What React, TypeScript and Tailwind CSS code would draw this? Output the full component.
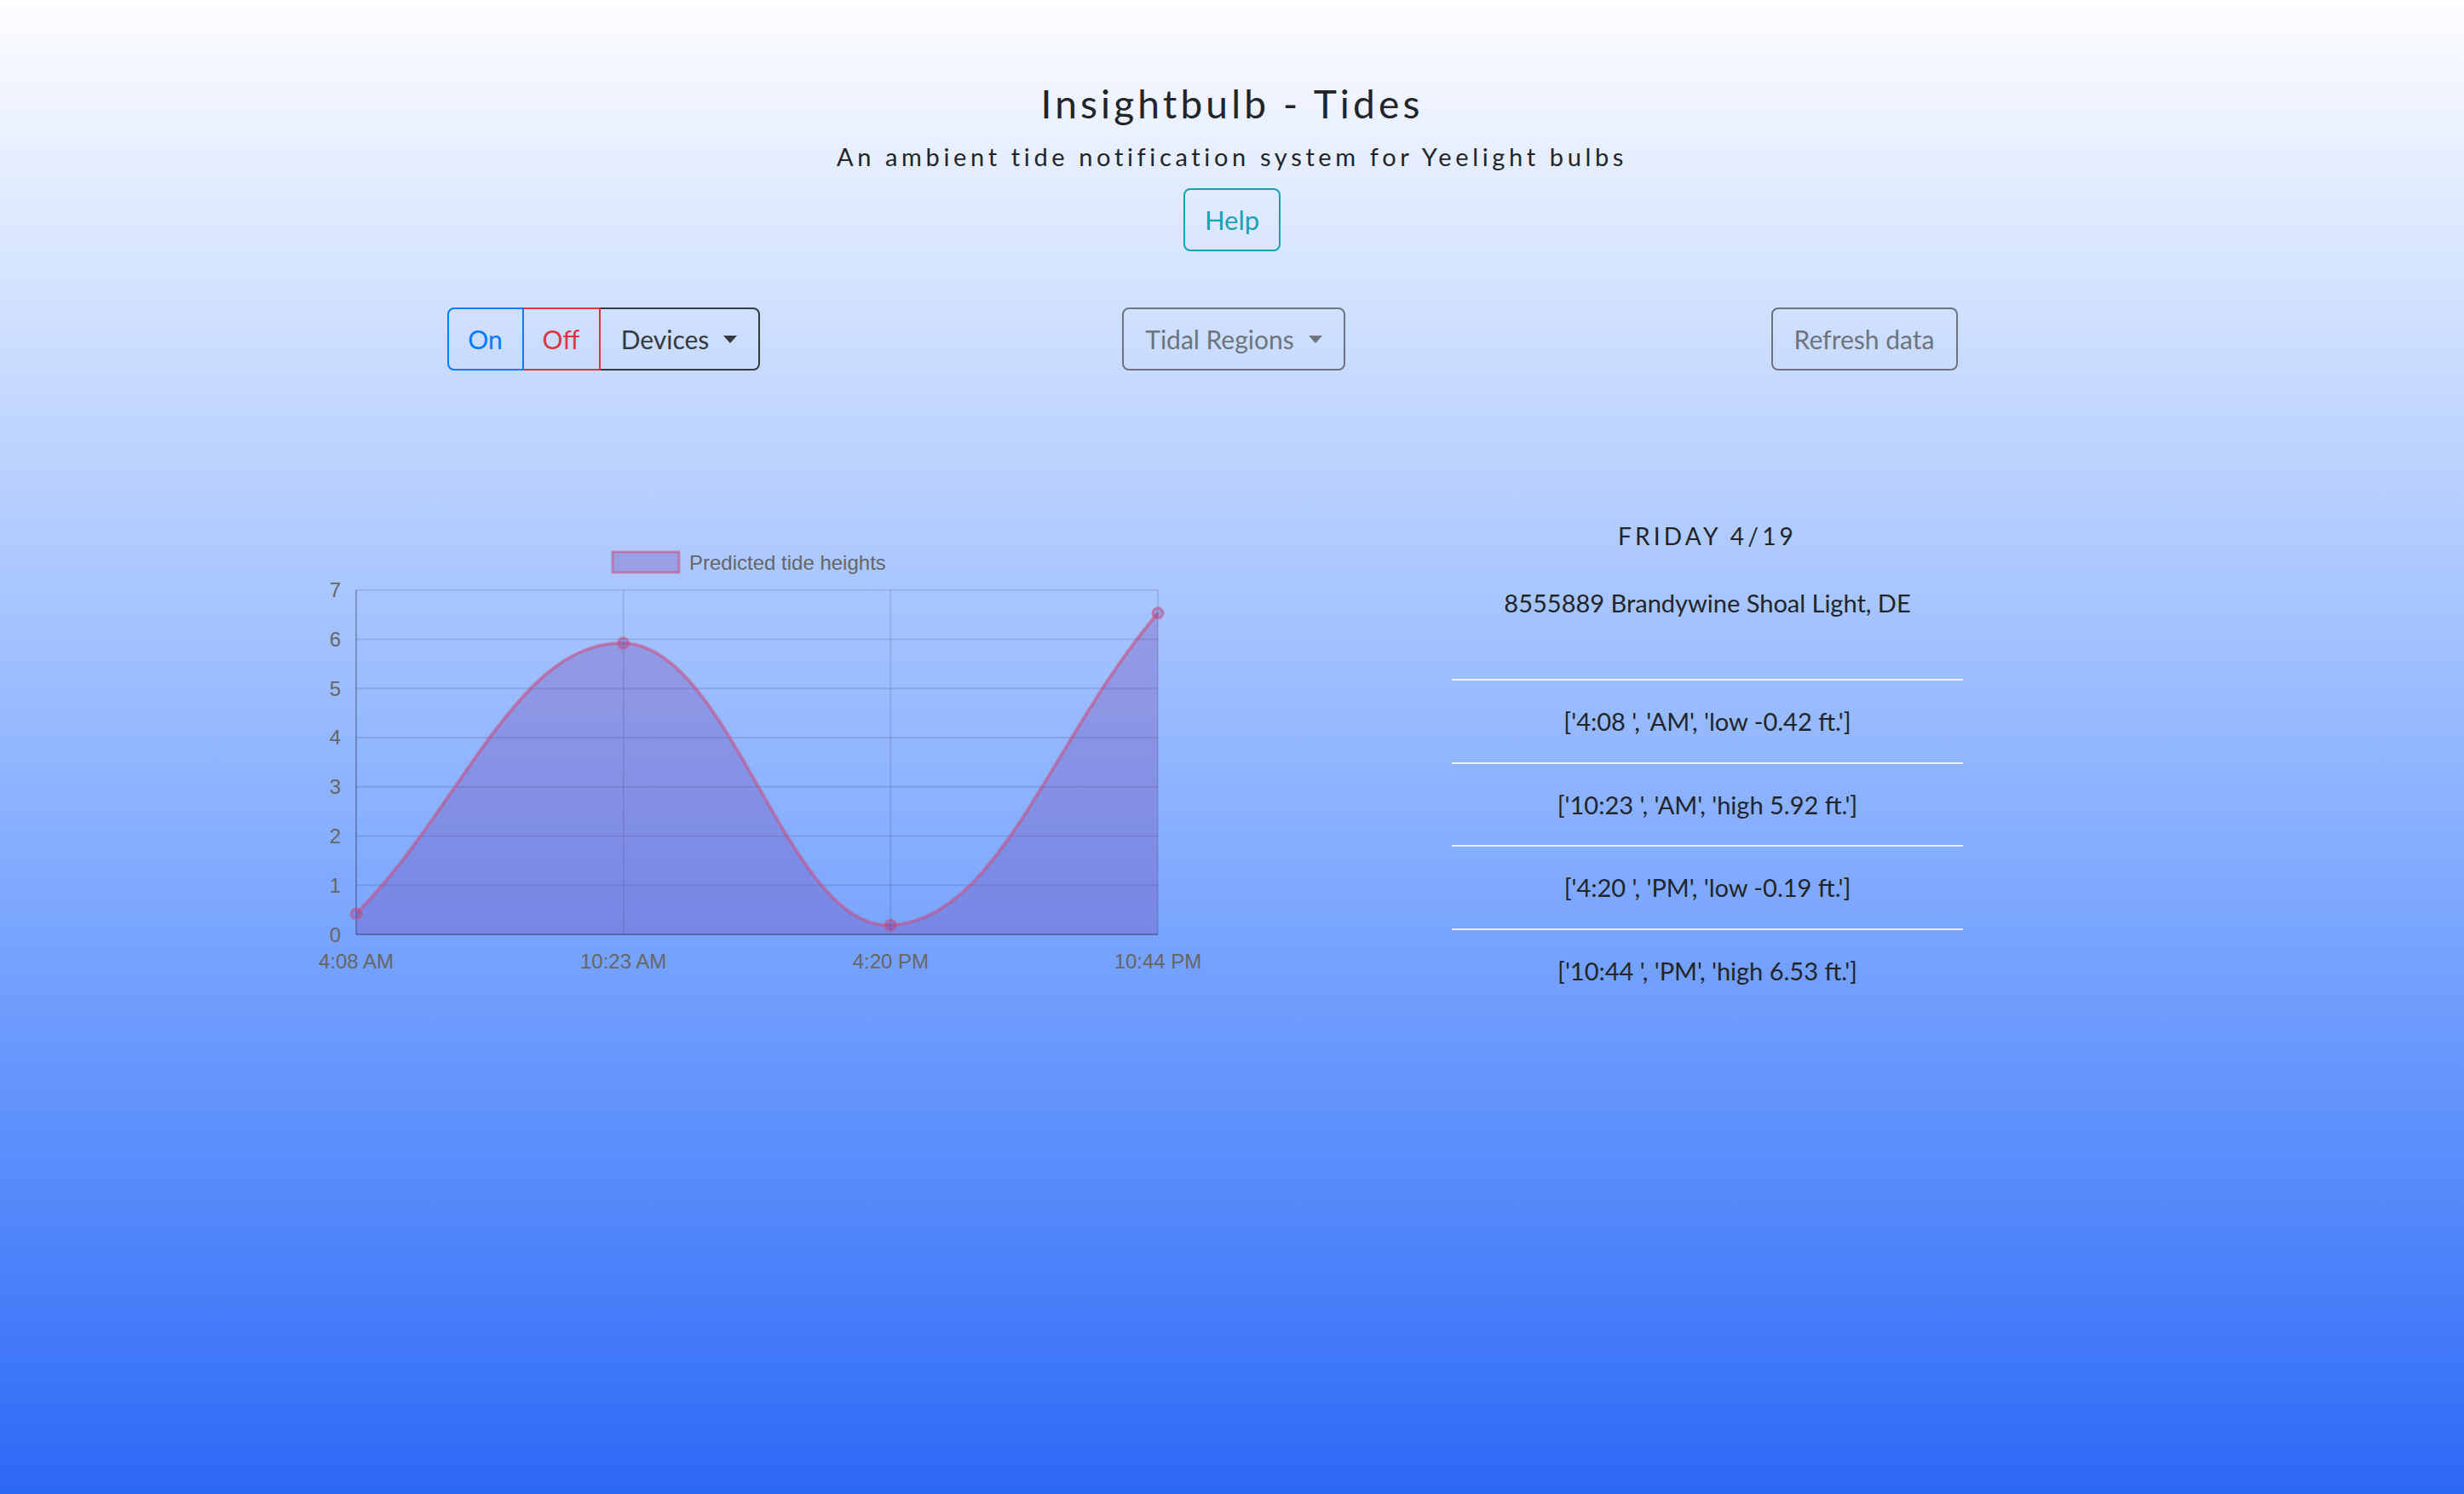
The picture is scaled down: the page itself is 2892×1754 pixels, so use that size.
import React from "react";

interface ITide {
  label: string;
  value: number;
  row: string;
}

const tides: ITide[] = [
  { label: "4:08 AM", value: 0.42, row: "['4:08 ', 'AM', 'low -0.42 ft.']" },
  { label: "10:23 AM", value: 5.92, row: "['10:23 ', 'AM', 'high 5.92 ft.']" },
  { label: "4:20 PM", value: 0.19, row: "['4:20 ', 'PM', 'low -0.19 ft.']" },
  { label: "10:44 PM", value: 6.53, row: "['10:44 ', 'PM', 'high 6.53 ft.']" },
];

// chart area in page pixels (svg viewBox uses the same numbers)
const left = 420;
const right = 1361;
const top = 692.7;
const bottom = 1097;
const unit = (bottom - top) / 7;

const TideChart: React.FC = () => {
  const step = (right - left) / (tides.length - 1);
  const pts = tides.map((t, i) => ({ x: left + i * step, y: bottom - t.value * unit }));

  // same spline chart.js uses (tension 0.4)
  const cps = pts.map((cur, i) => {
    const prev = pts[i - 1] || cur;
    const next = pts[i + 1] || cur;
    const d01 = Math.hypot(cur.x - prev.x, cur.y - prev.y);
    const d12 = Math.hypot(next.x - cur.x, next.y - cur.y);
    const s01 = d01 / (d01 + d12 || 1);
    const s12 = d12 / (d01 + d12 || 1);
    const fa = 0.4 * s01;
    const fb = 0.4 * s12;
    return {
      px: cur.x - fa * (next.x - prev.x),
      py: Math.min(bottom, Math.max(top, cur.y - fa * (next.y - prev.y))),
      nx: cur.x + fb * (next.x - prev.x),
      ny: Math.min(bottom, Math.max(top, cur.y + fb * (next.y - prev.y))),
    };
  });

  let line = `M ${pts[0].x} ${pts[0].y}`;
  for (let i = 1; i < pts.length; i++) {
    line += ` C ${cps[i - 1].nx} ${cps[i - 1].ny} ${cps[i].px} ${cps[i].py} ${pts[i].x} ${pts[i].y}`;
  }
  const area = `${line} L ${right} ${bottom} L ${left} ${bottom} Z`;

  const fill = "rgba(111, 65, 170, 0.3)";
  const stroke = "rgba(205, 75, 120, 0.55)";

  return (
    <svg
      width={1110}
      height={530}
      viewBox="338 630 1110 530"
      style={{ fontFamily: "'Liberation Sans', Arial, sans-serif" }}
    >
      {/* legend */}
      <rect x={721} y={648} width={78} height={24} fill={fill} stroke={stroke} strokeWidth={3} />
      <text x={811} y={660} fontSize={24} fill="#666" dominantBaseline="central">
        Predicted tide heights
      </text>

      {/* horizontal grid + y ticks */}
      {[0, 1, 2, 3, 4, 5, 6, 7].map((v) => {
        const y = bottom - v * unit;
        return (
          <g key={v}>
            <line
              x1={left}
              x2={right}
              y1={y}
              y2={y}
              stroke={v === 0 ? "rgba(0,0,0,0.3)" : "rgba(0,0,0,0.1)"}
              strokeWidth={2}
            />
            <text x={402} y={y} fontSize={24} fill="#666" textAnchor="end" dominantBaseline="central">
              {v}
            </text>
          </g>
        );
      })}

      {/* vertical grid + x ticks */}
      {pts.map((p, i) => (
        <g key={i}>
          <line
            x1={p.x}
            x2={p.x}
            y1={top}
            y2={bottom}
            stroke={i === 0 ? "rgba(0,0,0,0.25)" : "rgba(0,0,0,0.1)"}
            strokeWidth={2}
          />
          <text x={p.x} y={1128} fontSize={24} fill="#666" textAnchor="middle" dominantBaseline="central">
            {tides[i].label}
          </text>
        </g>
      ))}

      <path d={area} fill={fill} />
      <path d={line} fill="none" stroke={stroke} strokeWidth={4} />
      {pts.map((p, i) => (
        <circle key={i} cx={p.x} cy={p.y} r={6} fill={fill} stroke={stroke} strokeWidth={3} />
      ))}
    </svg>
  );
};

const Caret: React.FC = () => (
  <span className="ml-[17px] inline-block h-0 w-0 border-x-[8px] border-t-[9px] border-x-transparent border-t-current align-middle" />
);

const App: React.FC = () => {
  return (
    <div
      className="min-h-screen w-full bg-linear-to-b from-[#fdfdff] to-[#2c68f6] text-[#212529]"
      style={{ fontFamily: "'Source Sans Pro', Lato, 'Noto Sans', sans-serif" }}
    >
      <header className="flex flex-col items-center pt-[94px]">
        <h1 className="text-[46px] leading-[56px] tracking-[0.09em]">Insightbulb - Tides</h1>
        <p className="mt-[14px] text-[29px] leading-[40px] tracking-[0.16em]">
          An ambient tide notification system for Yeelight bulbs
        </p>
        <button className="mt-[17px] h-[74px] w-[114px] rounded-[8px] border-2 border-[#17a2b8] text-[31px] text-[#17a2b8]">
          Help
        </button>
      </header>

      <div className="mx-auto mt-[66px] grid w-[2220px] translate-x-[2px] grid-cols-3">
        <div className="flex justify-center">
          <div className="flex h-[74px] text-[30px]">
            <button className="w-[90px] rounded-l-[8px] border-2 border-[#007bff] text-[#007bff]">On</button>
            <button className="w-[90px] border-2 border-l-0 border-[#dc3545] text-[#dc3545]">Off</button>
            <button className="flex w-[187px] items-center justify-center rounded-r-[8px] border-2 border-l-0 border-[#343a40] text-[#343a40]">
              Devices
              <Caret />
            </button>
          </div>
        </div>
        <div className="flex justify-center">
          <button className="flex h-[74px] w-[262px] items-center justify-center rounded-[8px] border-2 border-[#6c757d] text-[30px] text-[#6c757d]">
            Tidal Regions
            <Caret />
          </button>
        </div>
        <div className="flex justify-center">
          <button className="h-[74px] w-[219px] rounded-[8px] border-2 border-[#6c757d] text-[30px] text-[#6c757d]">
            Refresh data
          </button>
        </div>
      </div>

      <div className="mx-auto mt-[165px] grid w-[2220px] grid-cols-2">
        <div className="pt-[30px]">
          <TideChart />
        </div>
        <div className="flex flex-col items-center pt-[9px] pl-[6px]">
          <div className="text-[28px] leading-[40px] tracking-[0.15em]">FRIDAY 4/19</div>
          <div className="mt-[39px] text-[29px] leading-[40px]">8555889 Brandywine Shoal Light, DE</div>
          <ul className="mt-[69px] w-[600px]">
            {tides.map((t) => (
              <li
                key={t.row}
                className="flex h-[97.5px] items-center justify-center border-t-2 border-white/80 text-[29px]"
              >
                {t.row}
              </li>
            ))}
          </ul>
        </div>
      </div>
    </div>
  );
};

export default App;
